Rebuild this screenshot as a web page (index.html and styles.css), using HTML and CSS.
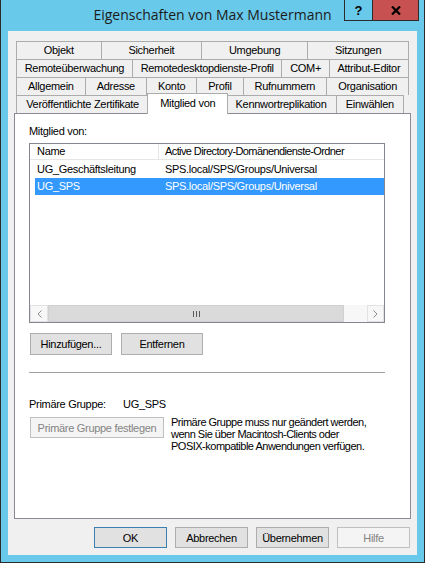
FILE: index.html
```html
<!DOCTYPE html>
<html lang="de">
<head>
<meta charset="utf-8">
<title>Eigenschaften von Max Mustermann</title>
<link rel="stylesheet" href="styles.css">
</head>
<body>
<div class="window">
  <div class="titlebar">
    <div class="spacer"></div>
    <div class="title">Eigenschaften von Max Mustermann</div>
    <div class="caption-buttons">
      <div class="cap-btn help">?</div>
      <div class="cap-btn close">
        <svg width="10" height="9" viewBox="0 0 10 9"><path d="M1 0.5 L9 8.5 M9 0.5 L1 8.5" stroke="#000" stroke-width="2.2" fill="none"/></svg>
      </div>
    </div>
  </div>
  <div class="client">
    <div class="tabs">
      <div class="tabrow">
        <div class="tab">Objekt</div>
        <div class="tab">Sicherheit</div>
        <div class="tab">Umgebung</div>
        <div class="tab">Sitzungen</div>
      </div>
      <div class="tabrow">
        <div class="tab">Remoteüberwachung</div>
        <div class="tab">Remotedesktopdienste-Profil</div>
        <div class="tab">COM+</div>
        <div class="tab">Attribut-Editor</div>
      </div>
      <div class="tabrow">
        <div class="tab">Allgemein</div>
        <div class="tab">Adresse</div>
        <div class="tab">Konto</div>
        <div class="tab">Profil</div>
        <div class="tab">Rufnummern</div>
        <div class="tab">Organisation</div>
      </div>
      <div class="tabrow last">
        <div class="tab">Veröffentlichte Zertifikate</div>
        <div class="tab active">Mitglied von</div>
        <div class="tab">Kennwortreplikation</div>
        <div class="tab">Einwählen</div>
      </div>
    </div>
    <div class="panel">
      <div class="group-label">Mitglied von:</div>
      <div class="list">
        <div class="list-header">
          <div class="hcol1">Name</div>
          <div class="hcol2">Active Directory-Domänendienste-Ordner</div>
        </div>
        <div class="list-row">
          <div class="cell1">UG_Geschäftsleitung</div>
          <div class="cell2">SPS.local/SPS/Groups/Universal</div>
        </div>
        <div class="list-row selected">
          <div class="cell1">UG_SPS</div>
          <div class="cell2">SPS.local/SPS/Groups/Universal</div>
        </div>
        <div class="hscroll">
          <div class="sb-btn sb-left">
            <svg width="5" height="8" viewBox="0 0 5 8"><path d="M4.5 0.5 L1 4 L4.5 7.5" stroke="#8a8a8a" stroke-width="1" fill="none"/></svg>
          </div>
          <div class="sb-thumb">
            <svg width="7" height="6" viewBox="0 0 7 6"><path d="M0.5 0 V6 M3.5 0 V6 M6.5 0 V6" stroke="#5a5a5a" stroke-width="1"/></svg>
          </div>
          <div class="sb-track"></div>
          <div class="sb-btn sb-right">
            <svg width="5" height="8" viewBox="0 0 5 8"><path d="M0.5 0.5 L4 4 L0.5 7.5" stroke="#8a8a8a" stroke-width="1" fill="none"/></svg>
          </div>
        </div>
      </div>
      <div class="list-buttons">
        <div class="btn btn-add">Hinzufügen...</div>
        <div class="btn btn-remove">Entfernen</div>
      </div>
      <div class="separator"></div>
      <div class="primary-row">
        <div class="primary-label">Primäre Gruppe:</div>
        <div class="primary-value">UG_SPS</div>
      </div>
      <div class="primary-set">
        <div class="btn disabled btn-set">Primäre Gruppe festlegen</div>
        <div class="primary-note">Primäre Gruppe muss nur geändert werden,<br>wenn Sie über Macintosh-Clients oder<br>POSIX-kompatible Anwendungen verfügen.</div>
      </div>
    </div>
    <div class="dialog-buttons">
      <div class="btn dlg default">OK</div>
      <div class="btn dlg">Abbrechen</div>
      <div class="btn dlg">Übernehmen</div>
      <div class="btn dlg disabled">Hilfe</div>
    </div>
  </div>
</div>
</body>
</html>
```

FILE: styles.css
```css
* { box-sizing: border-box; }
html, body { margin: 0; padding: 0; }
body {
  width: 425px;
  height: 563px;
  overflow: hidden;
  font-family: "Liberation Sans", Arial, sans-serif;
  font-size: 11px;
  letter-spacing: -0.3px;
  color: #000;
  background: #69c9ea;
}
.window {
  width: 425px;
  height: 563px;
  background: #69c9ea;
  border: 1px solid #2b2b2b;
  border-top: none;
  display: flex;
  flex-direction: column;
}
.titlebar {
  flex: none;
  height: 31px;
  display: grid;
  grid-template-columns: 1fr auto 1fr;
  align-items: start;
}
.title {
  font-family: "Open Sans", sans-serif;
  font-size: 14px;
  letter-spacing: 0;
  line-height: 20px;
  padding-top: 5px;
  color: #1b1b1b;
  white-space: nowrap;
}
.caption-buttons {
  justify-self: end;
  display: flex;
  margin-right: 5px;
}
.cap-btn {
  height: 21px;
  border: 1px solid #2b2b2b;
  border-top: none;
  display: flex;
  align-items: center;
  justify-content: center;
}
.cap-btn.help {
  width: 29px;
  font-weight: bold;
  font-size: 13px;
  letter-spacing: 0;
  background: #69c9ea;
}
.cap-btn.close {
  width: 47px;
  margin-left: -1px;
  background: #c75050;
}
.client {
  flex: none;
  height: 524px;
  margin: 0 7px;
  background: #f0f0f0;
  display: flex;
  flex-direction: column;
  padding-top: 10px;
}
.tabs { margin: 0 8px; }
.tabrow {
  display: flex;
  height: 18px;
}
.tabrow.last { margin-right: 5px; }
.tab {
  flex: 1 1 auto;
  height: 18px;
  border: 1px solid #acacac;
  border-bottom: none;
  background: #f0f0f0;
  text-align: center;
  line-height: 17px;
  padding: 0 6px;
  white-space: nowrap;
}
.tab + .tab { margin-left: -1px; }
.tab.active {
  background: #fff;
  margin: -2px -2px -1px -2px;
  padding: 0 9px;
  height: 21px;
  line-height: 18px;
  position: relative;
  z-index: 1;
}
.panel {
  height: 406px;
  margin: 0 6px;
  border: 1px solid #898c95;
  background: #fff;
  padding: 11px 0 0 14px;
}
.group-label {
  line-height: 13px;
  height: 13px;
  margin-bottom: 5px;
}
.list {
  width: 356px;
  height: 180px;
  border: 1px solid #828790;
  background: #fff;
  display: flex;
  flex-direction: column;
}
.list-header {
  display: flex;
  height: 16px;
  border-bottom: 1px solid #e5e5e5;
  line-height: 15px;
  white-space: nowrap;
  overflow: hidden;
}
.hcol1 {
  width: 129px;
  flex: none;
  padding-left: 7px;
  border-right: 1px solid #e5e5e5;
}
.hcol2 { padding-left: 6px; letter-spacing: -0.6px; }
.list-row {
  display: flex;
  height: 17px;
  line-height: 17px;
  margin-left: 5px;
  white-space: nowrap;
}
.list-header + .list-row { margin-top: 1px; }
.list-row.selected {
  background: #3399ff;
  color: #fff;
}
.cell1 {
  width: 130px;
  flex: none;
  padding-left: 2px;
}
.hscroll {
  margin-top: auto;
  height: 17px;
  display: flex;
}
.sb-btn {
  display: flex;
  align-items: center;
  justify-content: center;
  background: #f7f7f7;
  border: 1px solid #e2e2e2;
}
.sb-left { width: 18px; }
.sb-right { width: 17px; }
.sb-thumb {
  width: 296px;
  background: #dadada;
  border: 1px solid #d0d0d0;
  display: flex;
  align-items: center;
  justify-content: center;
}
.sb-track {
  width: 23px;
  background: #f7f7f7;
}
.btn {
  height: 22px;
  border: 1px solid #adadad;
  background: #e1e1e1;
  display: flex;
  align-items: center;
  justify-content: center;
  white-space: nowrap;
}
.btn.disabled {
  border-color: #bfbfbf;
  background: #f4f4f4;
  color: #838383;
}
.list-buttons {
  display: flex;
  gap: 9px;
  margin: 10px 0 0 1px;
}
.btn-add, .btn-remove { width: 82px; }
.separator {
  width: 356px;
  margin-top: 17px;
  border-top: 1px solid #a0a0a0;
}
.primary-row {
  display: flex;
  margin-top: 25px;
  line-height: 13px;
}
.primary-label { width: 94px; }
.primary-set {
  display: flex;
  align-items: flex-start;
  margin-top: 6px;
}
.btn-set {
  width: 134px;
  height: 21px;
  margin-left: 1px;
}
.primary-note {
  margin-left: 7px;
  margin-top: -1px;
  line-height: 12px;
  letter-spacing: -0.5px;
}
.dialog-buttons {
  display: flex;
  justify-content: flex-end;
  gap: 8px;
  margin: 8px 7px 0 0;
}
.btn.dlg {
  width: 73px;
  height: 21px;
}
.btn.default {
  border-color: #3c7fb1;
}
```
